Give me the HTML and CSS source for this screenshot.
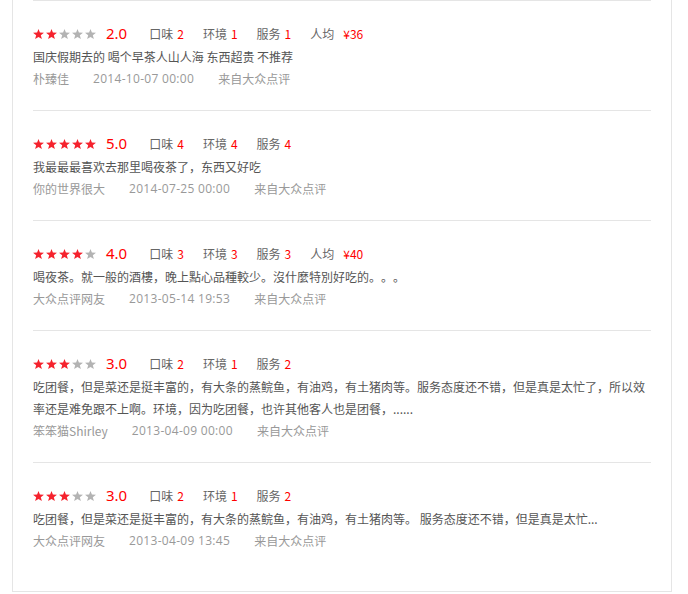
FILE: index.html
```html
<!DOCTYPE html>
<html lang="zh-CN">
<head>
<meta charset="utf-8">
<title>评论</title>
<link rel="stylesheet" href="styles.css">
</head>
<body>
<svg width="0" height="0" class="defs">
  <defs>
    <polygon id="st" points="5.5,0 6.9,3.6 11,3.8 7.8,6.3 8.9,10 5.5,7.9 2.1,10 3.2,6.3 0,3.8 4.1,3.6"/>
  </defs>
</svg>
<div class="box">
  <div class="item">
    <div class="head">
      <svg class="stars" width="64" height="10" viewBox="0 0 64 10"><use href="#st" x="0" class="on"/><use href="#st" x="13" class="on"/><use href="#st" x="26" class="off"/><use href="#st" x="39" class="off"/><use href="#st" x="52" class="off"/></svg>
      <span class="score">2.0</span>
      <span class="sub">口味<em>2</em></span>
      <span class="sub">环境<em>1</em></span>
      <span class="sub">服务<em>1</em></span>
      <span class="sub">人均<em class="price">¥36</em></span>
    </div>
    <p class="txt">国庆假期去的 喝个早茶人山人海 东西超贵 不推荐</p>
    <div class="meta"><span>朴臻佳</span><span class="date">2014-10-07 00:00</span><span>来自大众点评</span></div>
  </div>
  <div class="item">
    <div class="head">
      <svg class="stars" width="64" height="10" viewBox="0 0 64 10"><use href="#st" x="0" class="on"/><use href="#st" x="13" class="on"/><use href="#st" x="26" class="on"/><use href="#st" x="39" class="on"/><use href="#st" x="52" class="on"/></svg>
      <span class="score">5.0</span>
      <span class="sub">口味<em>4</em></span>
      <span class="sub">环境<em>4</em></span>
      <span class="sub">服务<em>4</em></span>
    </div>
    <p class="txt">我最最最喜欢去那里喝夜茶了，东西又好吃</p>
    <div class="meta"><span>你的世界很大</span><span class="date">2014-07-25 00:00</span><span>来自大众点评</span></div>
  </div>
  <div class="item">
    <div class="head">
      <svg class="stars" width="64" height="10" viewBox="0 0 64 10"><use href="#st" x="0" class="on"/><use href="#st" x="13" class="on"/><use href="#st" x="26" class="on"/><use href="#st" x="39" class="on"/><use href="#st" x="52" class="off"/></svg>
      <span class="score">4.0</span>
      <span class="sub">口味<em>3</em></span>
      <span class="sub">环境<em>3</em></span>
      <span class="sub">服务<em>3</em></span>
      <span class="sub">人均<em class="price">¥40</em></span>
    </div>
    <p class="txt">喝夜茶。就一般的酒樓，晚上點心品種較少。沒什麼特別好吃的。。。</p>
    <div class="meta"><span>大众点评网友</span><span class="date">2013-05-14 19:53</span><span>来自大众点评</span></div>
  </div>
  <div class="item">
    <div class="head">
      <svg class="stars" width="64" height="10" viewBox="0 0 64 10"><use href="#st" x="0" class="on"/><use href="#st" x="13" class="on"/><use href="#st" x="26" class="on"/><use href="#st" x="39" class="off"/><use href="#st" x="52" class="off"/></svg>
      <span class="score">3.0</span>
      <span class="sub">口味<em>2</em></span>
      <span class="sub">环境<em>1</em></span>
      <span class="sub">服务<em>2</em></span>
    </div>
    <p class="txt">吃团餐，但是菜还是挺丰富的，有大条的蒸鲩鱼，有油鸡，有土猪肉等。服务态度还不错，但是真是太忙了，所以效率还是难免跟不上啊。环境，因为吃团餐，也许其他客人也是团餐，......</p>
    <div class="meta"><span>笨笨猫Shirley</span><span class="date">2013-04-09 00:00</span><span>来自大众点评</span></div>
  </div>
  <div class="item">
    <div class="head">
      <svg class="stars" width="64" height="10" viewBox="0 0 64 10"><use href="#st" x="0" class="on"/><use href="#st" x="13" class="on"/><use href="#st" x="26" class="on"/><use href="#st" x="39" class="off"/><use href="#st" x="52" class="off"/></svg>
      <span class="score">3.0</span>
      <span class="sub">口味<em>2</em></span>
      <span class="sub">环境<em>1</em></span>
      <span class="sub">服务<em>2</em></span>
    </div>
    <p class="txt">吃团餐，但是菜还是挺丰富的，有大条的蒸鲩鱼，有油鸡，有土猪肉等。 服务态度还不错，但是真是太忙...</p>
    <div class="meta"><span>大众点评网友</span><span class="date">2013-04-09 13:45</span><span>来自大众点评</span></div>
  </div>
</div>
</body>
</html>
```

FILE: styles.css
```css
html, body {
  margin: 0;
  padding: 0;
  background: #fff;
}
body {
  font-family: "Noto Sans CJK SC", "Liberation Sans", sans-serif;
  font-size: 12px;
  color: #666;
  text-spacing-trim: space-all;
}
.defs {
  position: absolute;
  width: 0;
  height: 0;
}
.box {
  margin-left: 12px;
  width: 618px;
  padding: 0 20px 19px 20px;
  border: 1px solid #e5e5e5;
  border-top: 0;
}
.item {
  border-top: 1px solid #e5e5e5;
  padding: 22px 0 20px;
}
.head {
  display: flex;
  align-items: center;
  height: 22px;
  line-height: 22px;
}
.stars {
  display: block;
  flex: none;
}
.stars .on { fill: #f5222d; }
.stars .off { fill: #b3b3b3; }
.score {
  color: #f00;
  font-size: 15px;
  margin-left: 9px;
  margin-right: 22px;
  font-family: "Noto Sans", "Liberation Sans", sans-serif;
  position: relative;
  top: -1px;
}
.sub {
  margin-right: 19px;
  color: #666;
}
.sub em {
  font-style: normal;
  color: #f00;
  margin-left: 4px;
}
.sub em.price {
  margin-left: 9px;
}
.txt {
  margin: 0;
  padding-top: 1px;
  line-height: 22px;
  color: #555;
}
.meta {
  display: flex;
  align-items: center;
  height: 22px;
  line-height: 22px;
  color: #999;
}
.meta span {
  margin-right: 24px;
}
.meta .date {
  font-family: "Open Sans", "Noto Sans CJK SC", sans-serif;
  letter-spacing: 0.3px;
}
```
